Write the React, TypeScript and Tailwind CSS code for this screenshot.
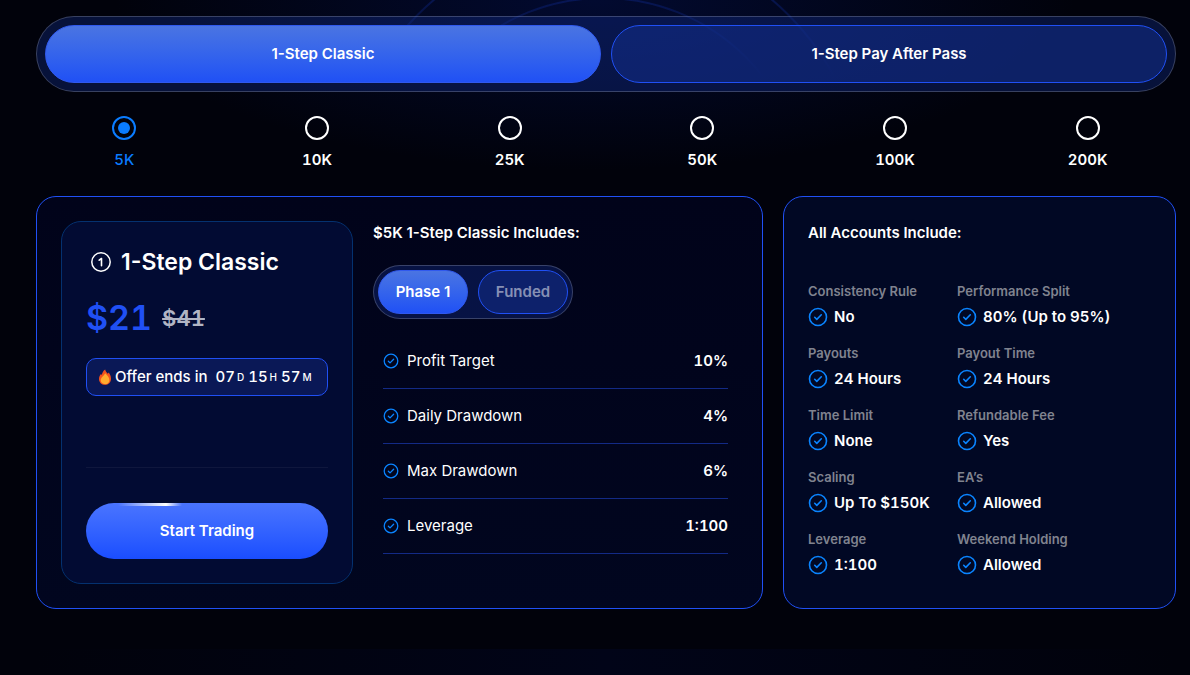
import React, { useState } from 'react';
import { clsx } from 'clsx';

interface Feature {
  label: string;
  value: string;
}

const challengeTypes = ['1-Step Classic', '1-Step Pay After Pass'];
const accountSizes = ['5K', '10K', '25K', '50K', '100K', '200K'];

const phaseRules: Feature[] = [
  { label: 'Profit Target', value: '10%' },
  { label: 'Daily Drawdown', value: '4%' },
  { label: 'Max Drawdown', value: '6%' },
  { label: 'Leverage', value: '1:100' },
];

const accountFeatures: Feature[] = [
  { label: 'Consistency Rule', value: 'No' },
  { label: 'Performance Split', value: '80% (Up to 95%)' },
  { label: 'Payouts', value: '24 Hours' },
  { label: 'Payout Time', value: '24 Hours' },
  { label: 'Time Limit', value: 'None' },
  { label: 'Refundable Fee', value: 'Yes' },
  { label: 'Scaling', value: 'Up To $150K' },
  { label: 'EA’s', value: 'Allowed' },
  { label: 'Leverage', value: '1:100' },
  { label: 'Weekend Holding', value: 'Allowed' },
];

const countdown = [
  { amount: '07', unit: 'D' },
  { amount: '15', unit: 'H' },
  { amount: '57', unit: 'M' },
];

const CheckIcon: React.FC<{ className?: string }> = ({ className }) => (
  <svg className={clsx('shrink-0 text-[#0a84ff]', className)} viewBox="0 0 20 20" fill="none" stroke="currentColor" strokeWidth={1.6} aria-hidden="true">
    <circle cx="10" cy="10" r="8.5" />
    <path d="M6.7 10.3l2.1 2.1 4.5-4.6" strokeLinecap="round" strokeLinejoin="round" />
  </svg>
);

const StepIcon = () => (
  <svg className="size-[30px] shrink-0 text-white" viewBox="0 0 30 30" fill="none" stroke="currentColor" aria-hidden="true">
    <circle cx="15" cy="15" r="9.2" strokeWidth={1.5} />
    <path d="M13.2 13.2l2.3-1.7v7.2" strokeWidth={1.6} strokeLinecap="round" strokeLinejoin="round" />
  </svg>
);

const FlameIcon = () => (
  <svg className="h-4 w-3 shrink-0" viewBox="0 0 12 16" aria-hidden="true">
    <path d="M6.2 0.4C6.5 2.6 8 3.4 8.8 4.8L9.6 3.6C11 5.3 12 7.3 12 9.7C12 13.3 9.4 15.8 6 15.8C2.6 15.8 0 13.3 0 9.9C0 7.9 0.8 6.2 2 4.9L2.9 6C3.1 3.7 4.2 1.7 6.2 0.4Z" fill="#f4511e" />
    <path d="M6.2 4.2C8 6.1 10.4 8.3 10.4 10.9C10.4 13.4 8.4 15.3 6 15.3C3.6 15.3 1.7 13.4 1.7 11.1C1.7 8.7 4.7 6.9 6.2 4.2Z" fill="#ffab2e" />
  </svg>
);

// Faint rings behind the top bar
const BackgroundRings = () => (
  <svg className="pointer-events-none absolute left-1/2 top-0 -z-10 h-[90px] w-[800px] -translate-x-1/2" viewBox="0 0 800 90" fill="none" aria-hidden="true">
    <defs>
      <linearGradient id="ring" gradientUnits="userSpaceOnUse" x1="0" y1="0" x2="0" y2="80">
        <stop offset="0" stopColor="#1233b0" stopOpacity={0.3} />
        <stop offset="1" stopColor="#1233b0" stopOpacity={0} />
      </linearGradient>
    </defs>
    <circle cx="408" cy="200" r="202" stroke="url(#ring)" strokeWidth={2} />
    <circle cx="408" cy="200" r="262" stroke="url(#ring)" strokeWidth={2} />
  </svg>
);

interface PillTabProps {
  active: boolean;
  onClick: () => void;
  className?: string;
  children: React.ReactNode;
}

const PillTab: React.FC<PillTabProps> = ({ active, onClick, className, children }) => (
  <button
    type="button"
    aria-pressed={active}
    onClick={onClick}
    className={clsx(
      'cursor-pointer rounded-full border font-semibold',
      active
        ? 'border-[#3059ee] bg-linear-to-b from-[#4a74e2] to-[#2050f5] text-white'
        : 'border-[#2050f5] bg-[#143092]/50',
      className
    )}
  >
    {children}
  </button>
);

const App: React.FC = () => {
  const [type, setType] = useState(challengeTypes[0]);
  const [size, setSize] = useState(accountSizes[0]);
  const [phase, setPhase] = useState('Phase 1');

  return (
    <main className="relative isolate flex min-h-screen flex-col bg-[#01020b] bg-[radial-gradient(ellipse_480px_170px_at_50%_0px,#020a30,transparent)] pt-4 pr-3.5 pl-9 font-['Inter',sans-serif] text-[15px] leading-6 text-white">
      <BackgroundRings />

      <div className="grid grid-cols-2 gap-2.5 rounded-full border border-white/20 bg-[#143092]/35 p-2">
        {challengeTypes.map((name) => (
          <PillTab key={name} active={type === name} onClick={() => setType(name)} className="h-[58px]">
            {name}
          </PillTab>
        ))}
      </div>

      <fieldset aria-label="Account size" className="mt-6 grid grid-cols-6 gap-4 tabular-nums">
        {accountSizes.map((item) => (
          <label key={item} className="flex cursor-pointer flex-col items-center gap-2 font-semibold has-checked:font-medium has-checked:text-[#0a7cff]">
            <input
              type="radio"
              name="size"
              value={item}
              checked={size === item}
              onChange={() => setSize(item)}
              className="size-6 appearance-none rounded-full border-2 border-white bg-clip-content p-1 checked:border-[#0a7cff] checked:bg-[#0a7cff]"
            />
            {item}
          </label>
        ))}
      </fieldset>

      <div className="mt-6 grid grid-cols-[1.85fr_1fr] gap-5">
        <section className="grid grid-cols-[4fr_5fr] gap-5 rounded-[20px] border border-[#2050f5] bg-linear-to-b from-[#01031a] to-[#01061f] p-6">
          <div className="flex flex-col rounded-[20px] border border-[#04316f] bg-[#020b33] p-6">
            <div className="flex h-8 items-center gap-[5px]">
              <StepIcon />
              <h2 className="text-[23px] font-semibold whitespace-nowrap">{type}</h2>
            </div>
            <div className="mt-5 flex h-10 items-center gap-2.5 tabular-nums">
              <span className="text-[34px] font-semibold text-[#2050f5]">$21</span>
              <s className="text-[22px] font-semibold text-[#b1b5c4]">$41</s>
            </div>
            <div className="mt-5 flex h-[38px] items-center gap-1 rounded-[10px] border border-[#2050f5] bg-[#0a1856] pl-3 font-medium whitespace-nowrap">
              <FlameIcon />
              <span>Offer ends in</span>
              <span className="ml-1 flex gap-1 tabular-nums">
                {countdown.map(({ amount, unit }) => (
                  <span key={unit} className="flex items-center gap-0.5">
                    {amount}
                    <span className="text-[10px]">{unit}</span>
                  </span>
                ))}
              </span>
            </div>
            <hr className="mt-[71px] border-white/5" />
            <button
              type="button"
              className="relative mt-[35px] h-14 cursor-pointer overflow-hidden rounded-full bg-linear-to-b from-[#4a74ff] to-[#1a4dff] font-semibold"
            >
              <span className="absolute top-0 left-8 h-[3px] w-16 bg-linear-to-r from-transparent via-white via-75% to-transparent" />
              Start Trading
            </button>
          </div>

          <div>
            <h3 className="font-semibold">$5K {type} Includes:</h3>
            <div className="mt-5 flex w-fit gap-2.5 rounded-full border border-white/20 bg-[#143092]/35 p-1">
              {['Phase 1', 'Funded'].map((name) => (
                <PillTab
                  key={name}
                  active={phase === name}
                  onClick={() => setPhase(name)}
                  className={clsx('h-11 w-[90px]', phase !== name && 'text-white/50')}
                >
                  {name}
                </PillTab>
              ))}
            </div>
            <dl className="mt-[15px] px-2.5">
              {phaseRules.map(({ label, value }) => (
                <div key={label} className="flex h-[55px] items-center gap-2 border-b border-[#132a86]">
                  <CheckIcon className="size-4" />
                  <dt>{label}</dt>
                  <dd className="ml-auto font-semibold tabular-nums">{value}</dd>
                </div>
              ))}
            </dl>
          </div>
        </section>

        <section className="rounded-[20px] border border-[#2050f5] bg-[#010824] p-6">
          <h3 className="font-semibold">All Accounts Include:</h3>
          <dl className="mt-9 grid grid-cols-[119px_1fr] gap-x-[30px] gap-y-3.5 font-semibold whitespace-nowrap">
            {accountFeatures.map(({ label, value }) => (
              <div key={label}>
                <dt className="text-[13px] leading-5 text-[#80838f]">{label}</dt>
                <dd className="mt-1 flex items-center gap-1.5 tabular-nums">
                  <CheckIcon className="size-5" />
                  {value}
                </dd>
              </div>
            ))}
          </dl>
        </section>
      </div>

      <div className="mt-10 flex-1 bg-linear-to-r from-transparent via-[#010418] to-transparent" />
    </main>
  );
};

export default App;
